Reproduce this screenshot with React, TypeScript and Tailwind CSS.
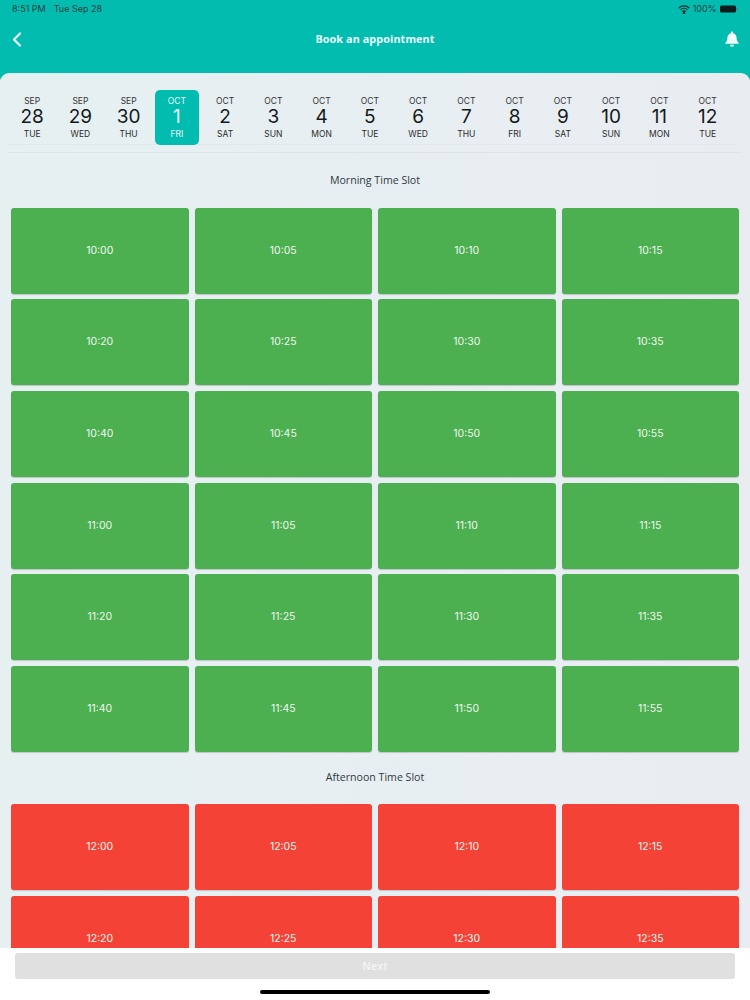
import React from "react";

const days: [string, string, string][] = [
  ["SEP", "28", "TUE"], ["SEP", "29", "WED"], ["SEP", "30", "THU"], ["OCT", "1", "FRI"],
  ["OCT", "2", "SAT"], ["OCT", "3", "SUN"], ["OCT", "4", "MON"], ["OCT", "5", "TUE"],
  ["OCT", "6", "WED"], ["OCT", "7", "THU"], ["OCT", "8", "FRI"], ["OCT", "9", "SAT"],
  ["OCT", "10", "SUN"], ["OCT", "11", "MON"], ["OCT", "12", "TUE"],
];

const morning = ["10:00","10:05","10:10","10:15","10:20","10:25","10:30","10:35","10:40","10:45","10:50","10:55","11:00","11:05","11:10","11:15","11:20","11:25","11:30","11:35","11:40","11:45","11:50","11:55"];
const afternoon = ["12:00","12:05","12:10","12:15","12:20","12:25","12:30","12:35"];

function Slot({ t, red }: { t: string; red?: boolean }) {
  return (
    <div className={`h-[86px] rounded-[3px] flex items-center justify-center font-['Inter',sans-serif] text-[10.5px] text-[#f1f8f1] shadow-[0_1px_1px_rgba(0,0,0,0.18)] ${red ? "bg-[#f44336]" : "bg-[#4caf50]"}`}>
      {t}
    </div>
  );
}

export default function App() {
  return (
    <div className="relative w-[750px] h-[1000px] overflow-hidden flex flex-col bg-white font-['Open_Sans',sans-serif]">
      <header className="h-[80px] shrink-0 bg-[#03bcb0] flex flex-col -mb-[7px]">
        <div className="h-[18px] px-3 flex items-center justify-between text-[9px] text-[#24403f] font-['Inter',sans-serif]">
          <div className="flex gap-[8px]"><span>8:51 PM</span><span>Tue Sep 28</span></div>
          <div className="flex items-center gap-[3px]">
            <svg width="12" height="9" viewBox="0 0 12 9" fill="none" stroke="#102a2a" strokeWidth="1.3">
              <path d="M0.7 3.1a7.6 7.6 0 0 1 10.6 0" />
              <path d="M2.5 4.9a5 5 0 0 1 7 0" />
              <path d="M4.3 6.6a2.4 2.4 0 0 1 3.4 0" />
              <circle cx="6" cy="8" r="0.6" fill="#102a2a" />
            </svg>
            <span>100%</span>
            <svg width="18" height="8" viewBox="0 0 18 8" className="ml-[0.5px]">
              <rect x="0" y="0.5" width="16" height="7" rx="1.5" fill="#0b1a1a" />
              <rect x="16.6" y="2.6" width="1" height="2.8" rx="0.5" fill="#4a6a6a" />
            </svg>
          </div>
        </div>
        <div className="h-[42px] px-[12px] grid grid-cols-[1fr_auto_1fr] items-center">
          <svg width="10" height="15" viewBox="0 0 10 15" fill="none" stroke="#eafffb" strokeWidth="2.2" strokeLinecap="round" strokeLinejoin="round" className="-ml-[0.5px]">
            <path d="M8 1.5 2 7.5l6 6" />
          </svg>
          <span className="text-[10.8px] font-bold text-[#e9fffb] tracking-[0.1px]">Book an appointment</span>
          <svg width="14" height="16" viewBox="0 0 14 16" fill="#f2fffd" className="justify-self-end -mr-[1px]">
            <path d="M7 0.6c.7 0 1.1.5 1.1 1.1v.5c2.2.5 3.500 2.300 3.500 4.600 0 2.700.6 3.800 2 5v.9H.4v-.9c1.400-1.200 2-2.300 2-5 0-2.300 1.300-4.100 3.500-4.600v-.5C5.900 1.100 6.300.6 7 .6Z" />
            <path d="M5 13.700h4a2 2 0 0 1-4 0Z" />
          </svg>
        </div>
      </header>

      <main className="relative flex-1 min-h-0 overflow-hidden rounded-t-[9px] bg-gradient-to-r from-[#e6f0f1] to-[#e9edf2]">
        <div className="pl-[8px] pr-[14px] pt-[17px]">
          <div className="flex h-[55px] border-b border-[#e2e8ea]">
            {days.map(([m, d, w], i) => {
              const on = i === 3;
              return (
                <div key={i} className="w-[48.25px] flex justify-center shrink-0">
                  <div className={`w-[44px] h-[55px] rounded-[5px] flex flex-col items-center pt-[6px] font-['Inter',sans-serif] ${on ? "bg-[#03bcb0] text-[#e6fbf8]" : "text-[#14191c]"}`}>
                    <span className={`text-[8.5px] leading-[10px] ${on ? "" : "text-[#333333]"}`}>{m}</span>
                    <span className="text-[19px] leading-[22px] font-normal">{d}</span>
                    <span className={`text-[8.5px] leading-[12px] ${on ? "" : "text-[#2b2b2b]"}`}>{w}</span>
                  </div>
                </div>
              );
            })}
          </div>
        </div>
        <div className="mt-[7px] mx-[8px] h-px bg-[#dde3e6]" />
        <div className="h-[54.5px] pt-[1.5px] flex items-center justify-center text-[10.6px] text-[#2f3a40]">Morning Time Slot</div>
        <div className="grid grid-cols-4 gap-x-[6px] gap-y-[5.7px] px-[11px]">
          {morning.map((t) => <Slot key={t} t={t} />)}
        </div>
        <div className="h-[52px] flex items-center justify-center text-[10.6px] text-[#2f3a40]">Afternoon Time Slot</div>
        <div className="grid grid-cols-4 gap-x-[6px] gap-y-[5.7px] px-[11px]">
          {afternoon.map((t) => <Slot key={t} t={t} red />)}
        </div>
      </main>

      <footer className="h-[52px] shrink-0 bg-white flex flex-col items-center">
        <div className="mt-[5px] w-[720px] h-[26px] rounded-[3px] bg-[#e0e0e0] flex items-center justify-center text-[11px] font-semibold text-[#f5f5f5]">Next</div>
        <div className="mt-[11px] w-[230px] h-[4px] rounded-full bg-black" />
      </footer>
    </div>
  );
}
